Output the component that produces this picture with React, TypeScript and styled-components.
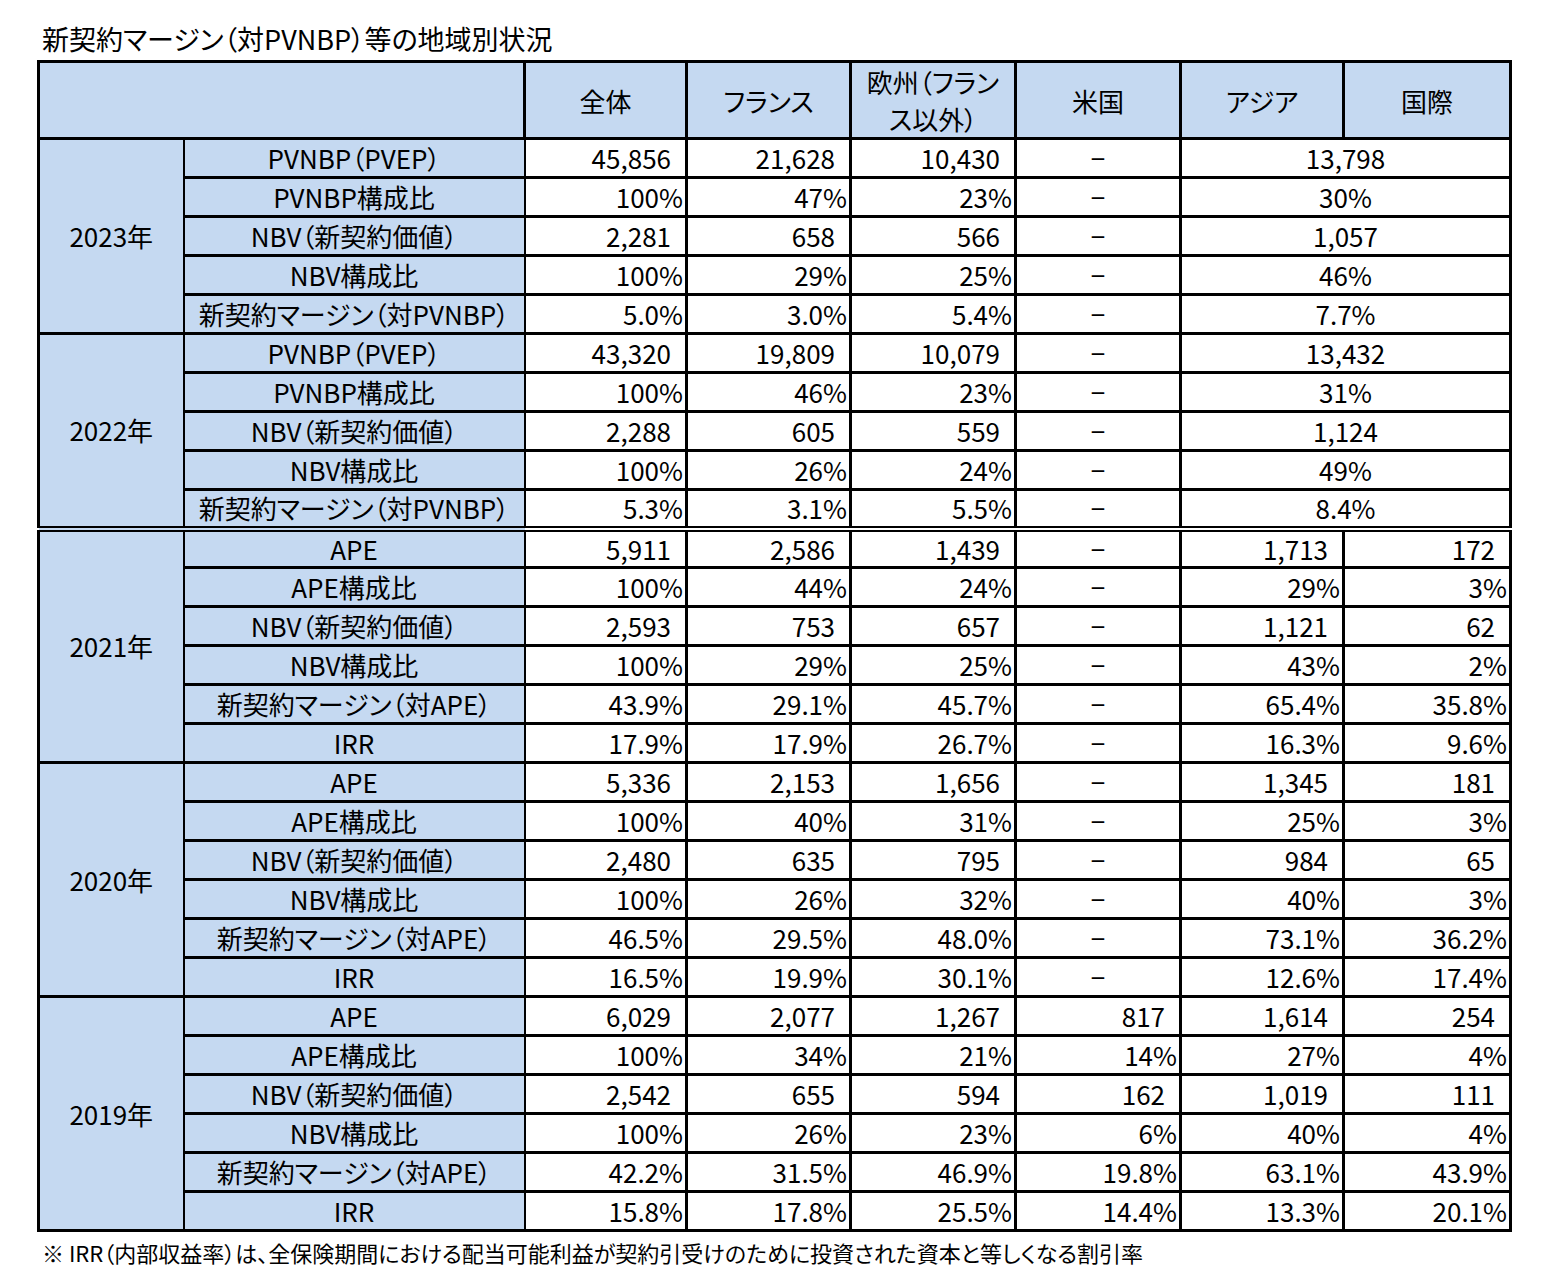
import React from 'react';
import styled, { createGlobalStyle } from 'styled-components';

const GlobalStyle = createGlobalStyle`
  html, body {
    margin: 0;
    padding: 0;
    background: #ffffff;
  }
  body {
    font-family: "Noto Sans CJK JP", "Noto Sans", sans-serif;
    color: #000000;
  }
`;

const Page = styled.div`
  display: flex;
  flex-direction: column;
  align-items: flex-start;
  padding: 22px 0 0 37px;
`;

const Title = styled.h1`
  margin: 0 0 4px 5px;
  font-size: 27px;
  font-weight: 400;
  line-height: 34px;
  font-feature-settings: "palt";
`;

const Table = styled.table`
  border-collapse: collapse;
  table-layout: fixed;
  width: 1472px;
  border: 3px solid #000;
  font-size: 26px;
  line-height: 30px;
`;

const HeadRow = styled.tr`
  height: 76px;
`;

const HeadCell = styled.th<{ $thinLeft?: boolean }>`
  background: #c5d9f1;
  font-weight: 400;
  font-feature-settings: "palt";
  text-align: center;
  vertical-align: middle;
  line-height: 37px;
  padding: 0;
  border: 3px solid #000;
  border-left-width: ${p => (p.$thinLeft ? '2px' : '3px')};
`;

const BodyRow = styled.tr<{ $double?: boolean }>`
  height: 39px;

  & > td {
    ${p => (p.$double ? 'border-top: 6px double #000;' : '')}
  }
`;

const YearCell = styled.td`
  background: #c5d9f1;
  text-align: center;
  vertical-align: middle;
  padding: 0;
  border: 3px solid #000;
  border-right: 2px solid #000;
`;

const LabelCell = styled.td`
  background: #c5d9f1;
  text-align: center;
  white-space: nowrap;
  font-feature-settings: "palt";
  padding: 0;
  border: 3px solid #000;
  border-left-width: 2px;
  border-right-width: 2px;
`;

const ValueCell = styled.td<{ $align: 'right' | 'center'; $pct?: boolean; $thinLeft?: boolean }>`
  background: #ffffff;
  text-align: ${p => p.$align};
  white-space: nowrap;
  padding: 0 ${p => (p.$align === 'center' ? '0' : p.$pct ? '2px' : '14px')} 0 0;
  border: 3px solid #000;
  border-left-width: ${p => (p.$thinLeft ? '2px' : '3px')};

  ${LabelCell} + & {
    border-left-width: 2px;
  }
`;

const Note = styled.p`
  margin: 6px 0 0 5px;
  font-size: 22px;
  line-height: 28px;
  font-feature-settings: "palt";
`;

type Group = {
  year: string;
  merged: boolean;
  rows: { label: string; values: string[] }[];
};

const DASH = '−';

const groups: Group[] = [
  {
    year: '2023年',
    merged: true,
    rows: [
      { label: 'PVNBP（PVEP）', values: ['45,856', '21,628', '10,430', DASH, '13,798'] },
      { label: 'PVNBP構成比', values: ['100%', '47%', '23%', DASH, '30%'] },
      { label: 'NBV（新契約価値）', values: ['2,281', '658', '566', DASH, '1,057'] },
      { label: 'NBV構成比', values: ['100%', '29%', '25%', DASH, '46%'] },
      { label: '新契約マージン（対PVNBP）', values: ['5.0%', '3.0%', '5.4%', DASH, '7.7%'] },
    ],
  },
  {
    year: '2022年',
    merged: true,
    rows: [
      { label: 'PVNBP（PVEP）', values: ['43,320', '19,809', '10,079', DASH, '13,432'] },
      { label: 'PVNBP構成比', values: ['100%', '46%', '23%', DASH, '31%'] },
      { label: 'NBV（新契約価値）', values: ['2,288', '605', '559', DASH, '1,124'] },
      { label: 'NBV構成比', values: ['100%', '26%', '24%', DASH, '49%'] },
      { label: '新契約マージン（対PVNBP）', values: ['5.3%', '3.1%', '5.5%', DASH, '8.4%'] },
    ],
  },
  {
    year: '2021年',
    merged: false,
    rows: [
      { label: 'APE', values: ['5,911', '2,586', '1,439', DASH, '1,713', '172'] },
      { label: 'APE構成比', values: ['100%', '44%', '24%', DASH, '29%', '3%'] },
      { label: 'NBV（新契約価値）', values: ['2,593', '753', '657', DASH, '1,121', '62'] },
      { label: 'NBV構成比', values: ['100%', '29%', '25%', DASH, '43%', '2%'] },
      { label: '新契約マージン（対APE）', values: ['43.9%', '29.1%', '45.7%', DASH, '65.4%', '35.8%'] },
      { label: 'IRR', values: ['17.9%', '17.9%', '26.7%', DASH, '16.3%', '9.6%'] },
    ],
  },
  {
    year: '2020年',
    merged: false,
    rows: [
      { label: 'APE', values: ['5,336', '2,153', '1,656', DASH, '1,345', '181'] },
      { label: 'APE構成比', values: ['100%', '40%', '31%', DASH, '25%', '3%'] },
      { label: 'NBV（新契約価値）', values: ['2,480', '635', '795', DASH, '984', '65'] },
      { label: 'NBV構成比', values: ['100%', '26%', '32%', DASH, '40%', '3%'] },
      { label: '新契約マージン（対APE）', values: ['46.5%', '29.5%', '48.0%', DASH, '73.1%', '36.2%'] },
      { label: 'IRR', values: ['16.5%', '19.9%', '30.1%', DASH, '12.6%', '17.4%'] },
    ],
  },
  {
    year: '2019年',
    merged: false,
    rows: [
      { label: 'APE', values: ['6,029', '2,077', '1,267', '817', '1,614', '254'] },
      { label: 'APE構成比', values: ['100%', '34%', '21%', '14%', '27%', '4%'] },
      { label: 'NBV（新契約価値）', values: ['2,542', '655', '594', '162', '1,019', '111'] },
      { label: 'NBV構成比', values: ['100%', '26%', '23%', '6%', '40%', '4%'] },
      { label: '新契約マージン（対APE）', values: ['42.2%', '31.5%', '46.9%', '19.8%', '63.1%', '43.9%'] },
      { label: 'IRR', values: ['15.8%', '17.8%', '25.5%', '14.4%', '13.3%', '20.1%'] },
    ],
  },
];

// column widths in px, year | label | 全体 | フランス | 欧州 | 米国 | アジア | 国際
const widths = [145, 341, 162, 164, 165, 165, 163, 167];

const renderValues = (values: string[], merged: boolean) =>
  values.map((v, i) => {
    if (merged && i === 4) {
      return (
        <ValueCell key={i} colSpan={2} $align="center">
          {v}
        </ValueCell>
      );
    }
    if (v === DASH) {
      return (
        <ValueCell key={i} $align="center">
          {v}
        </ValueCell>
      );
    }
    return (
      <ValueCell key={i} $align="right" $pct={v.endsWith('%')} $thinLeft={i === 5}>
        {v}
      </ValueCell>
    );
  });

const App = () => {
  return (
    <>
      <GlobalStyle />
      <Page>
        <Title>新契約マージン（対PVNBP）等の地域別状況</Title>
        <Table>
          <colgroup>
            {widths.map((w, i) => (
              <col key={i} style={{ width: w }} />
            ))}
          </colgroup>
          <thead>
            <HeadRow>
              <HeadCell colSpan={2} />
              <HeadCell>全体</HeadCell>
              <HeadCell>フランス</HeadCell>
              <HeadCell>
                欧州（フラン
                <br />
                ス以外）
              </HeadCell>
              <HeadCell>米国</HeadCell>
              <HeadCell>アジア</HeadCell>
              <HeadCell $thinLeft>国際</HeadCell>
            </HeadRow>
          </thead>
          <tbody>
            {groups.map((g, gi) =>
              g.rows.map((r, ri) => (
                <BodyRow key={`${g.year}-${ri}`} $double={gi === 2 && ri === 0}>
                  {ri === 0 && <YearCell rowSpan={g.rows.length}>{g.year}</YearCell>}
                  <LabelCell>{r.label}</LabelCell>
                  {renderValues(r.values, g.merged)}
                </BodyRow>
              ))
            )}
          </tbody>
        </Table>
        <Note>
          ※ IRR（内部収益率）は、全保険期間における配当可能利益が契約引受けのために投資された資本と等しくなる割引率
        </Note>
      </Page>
    </>
  );
};

export default App;
